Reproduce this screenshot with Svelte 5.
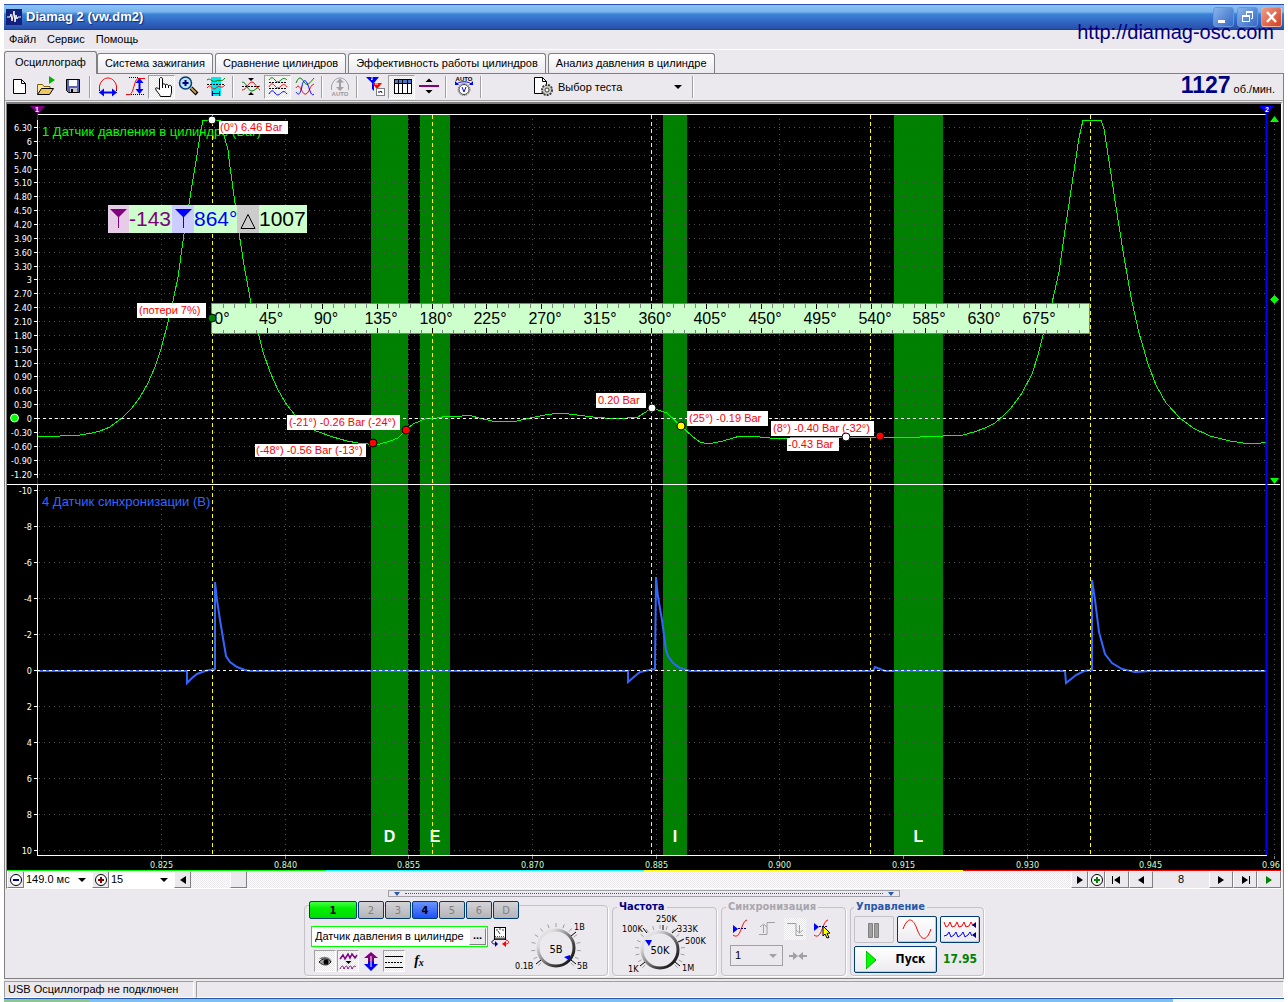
<script>
  const tabs = ['Осциллограф', 'Система зажигания', 'Сравнение цилиндров', 'Эффективность работы цилиндров', 'Анализ давления в цилиндре'];
  let activeTab = $state(0);
  let scroll = $state(4.5);
  let sensor = $state('Датчик давления в цилиндре');

  const tools = [
    ['new', 'open', 'save'],
    ['period', 'edge', 'hand', 'zoom', 'freq'],
    ['cross', 'split', 'overlay'],
    ['auto'],
    ['filter', 'table', 'divider'],
    ['autov']
  ];
  const pressed = ['hand', 'split', 'table'];

  const channels = [
    { name: '1', kind: 'wide' }, { name: '2' }, { name: '3' }, { name: '4', kind: 'blue' },
    { name: '5' }, { name: '6' }, { name: 'D' }
  ];

  // Pressure axis: 0.3 Bar per line, sync axis: 2 V per line
  const barLines = Array.from({ length: 26 }, (_, i) => {
    const v = 6.3 - i * 0.3;
    const whole = Math.abs(v - Math.round(v)) < 0.01;
    return { y: Math.round(127 + i * 13.86) + 0.5, text: whole ? String(Math.round(v) || 0) : v.toFixed(2) };
  });
  const voltLines = Array.from({ length: 11 }, (_, i) => ({ y: 490.5 + i * 36, text: String(i * 2 - 10) }));
  const timeLines = ['0.825', '0.840', '0.855', '0.870', '0.885', '0.900', '0.915', '0.930', '0.945', '0.96']
    .map((text, i) => ({ text, x: Math.round(161 + i * 123.65) + 0.5 }));

  const bands = [
    { x: 371, w: 37, name: 'D' }, { x: 420, w: 30, name: 'E' },
    { x: 663, w: 24, name: 'I' }, { x: 894, w: 49, name: 'L' }
  ];
  const strokes = [212.5, 432.5, 651.5, 870.5, 1090.5];

  const ticks = Array.from({ length: 79 }, (_, i) => ({ x: Math.round(212 + (i + 1) * 10.975) + 0.5, major: (i + 1) % 5 === 0 }));
  const degrees = Array.from({ length: 16 }, (_, i) => ({ x: i ? Math.round(212 + i * 54.88) + 4 : 222, text: i * 45 + '°' }));

  const notes = [
    { x: 219, y: 121, w: 69, h: 13, text: '(0°) 6.46 Bar' },
    { x: 137, y: 303, w: 69, h: 15, text: '(потери 7%)', dx: 2 },
    { x: 287, y: 415, w: 113, h: 15, text: '(-21°) -0.26 Bar (-24°)', dx: 2 },
    { x: 255, y: 444, w: 111, h: 13, text: '(-48°) -0.56 Bar (-13°)' },
    { x: 596, y: 393, w: 50, h: 15, text: '0.20 Bar', dx: 2 },
    { x: 687, y: 411, w: 81, h: 15, text: '(25°) -0.19 Bar', dx: 2 },
    { x: 771, y: 421, w: 103, h: 15, text: '(8°) -0.40 Bar (-32°)', dx: 2 },
    { x: 787, y: 438, w: 52, h: 13, text: '-0.43 Bar' }
  ];
  const dots = [
    [212, 120, '#fff'], [212, 318, '#008000'], [373, 443, '#f00'], [406, 430, '#f00'],
    [652, 408, '#fff'], [681, 426, '#ff0'], [846, 437, '#fff'], [880, 436, '#f00']
  ];

  const pressure = '38,437 60,436 80,435 92,433 100,431 110,427 122,418 132,408 140,397 148,383 155,367 161,349 168,322 173,301 178,277 184,234 189,204 193,179 197,155 200,135 203,120 219,120 222,122 224,135 228,150 230,167 235,203 239,233 244,265 251,303 259,336 263,352 270,372 278,390 287,405 295,415 305,425 316,431 333,437 347,441 358,443 368,444 380,444 390,441 398,438 406,430 413,424 420,421 427,418 437,418 448,416 457,417 468,415 483,419 497,422 517,421 530,418 545,415 560,413 577,415 593,417 617,419 638,417 652,408 667,413 681,426 693,437 700,442 708,444 723,441 740,436 760,437 780,439 800,437 846,437 853,438 880,437 920,437 943,436 963,435 974,432 985,428 995,423 1003,416 1011,408 1022,393 1032,374 1038,355 1043,335 1052,303 1059,272 1065,230 1072,184 1079,138 1083,120 1101,120 1104,129 1109,161 1116,207 1124,257 1131,297 1139,333 1148,364 1156,385 1166,403 1180,418 1193,428 1210,436 1230,441 1250,444 1261,443 1266,442';
  const sync = '38,671 187,671 187,683 192,678 197,674 205,671 215,669 215,582 217,600 220,620 223,638 226,656 230,662 237,667 245,670 250,671 626,671 628,671 628,682 635,676 640,672 655,669 656,577 658,597 662,620 666,650 668,656 673,663 680,668 690,671 873,671 875,667 885,671 1065,671 1066,683 1076,675 1084,671 1092,670 1092,580 1095,600 1099,632 1105,654 1112,663 1122,669 1135,672 1150,671 1266,671';

  // Scale strokes around a knob, clockwise from the lower left
  const knobTicks = (n) => Array.from({ length: n }, (_, i) => {
    const a = (135 + (i * 270) / (n - 1)) * Math.PI / 180;
    return { x1: 21 * Math.cos(a), y1: 21 * Math.sin(a), x2: 25 * Math.cos(a), y2: 25 * Math.sin(a) };
  });
</script>

{#snippet icon(name)}
  <svg class="ico" viewBox="0 0 24 22" width="24" height="22" fill="none">
    {#if name === 'new'}
      <path d="M6.5 3.5h8l4 4v10h-12z" fill="#fff" stroke="#000" /><path d="M14.5 3.5v4h4" stroke="#000" />
    {:else if name === 'open'}
      <path d="M3.500 18V8.500h5l1.500 2h6v3" fill="#ffe9a0" stroke="#806000" />
      <path d="M3.500 18.500l4-6h12l-4 6z" fill="#f0c860" stroke="#000" />
      <path d="M15 0l6 4-6 4z" fill="#00b400" />
    {:else if name === 'save'}
      <path d="M5.500 3.500h13v13h-11l-2-2z" fill="#5a66b4" stroke="#000" />
      <rect x="8" y="4" width="8" height="6" fill="#fff" /><rect x="9" y="12" width="7" height="4" fill="#c8c8d0" /><rect x="10" y="13" width="2" height="3" fill="#000" />
    {:else if name === 'period'}
      <path d="M3.500 14V10C5 4 9 2 12 2s7 2 8.500 8v4" stroke="#f00" />
      <path d="M3.500 14v4M20.500 14v4" stroke="#000" stroke-dasharray="1 1" />
      <path d="M7 16.500h10" stroke="#00f" stroke-width="2" /><path d="M3 16.500l5-4v8zM21 16.500l-5-4v8z" fill="#00f" />
    {:else if name === 'edge'}
      <path d="M3 18.500h4c4-2 4-15 8-16h7" stroke="#f00" /><path d="M6 1.500h10M8 18.500h13" stroke="#000" stroke-dasharray="1 1" />
      <path d="M16.500 6v8" stroke="#00f" stroke-width="2" /><path d="M16.500 2l-4 5h8zM16.500 18l-4-5h8z" fill="#00f" />
    {:else if name === 'hand'}
      <path d="M10.500 20.500c-1-3-5-6-5-8 0-1 2-1 4 1V3c0-2 3-2 3 0v6c0-2 3-1 3 0 0-1 3-1 3 1 1-1 3-1 3 1v5c0 2-1 3-1 4.500z" fill="#fff" stroke="#000" />
      <path d="M12.500 9v3M15.500 9v3M18.500 10v2" stroke="#000" />
    {:else if name === 'zoom'}
      <path d="M14 12l6 6" stroke="#000" stroke-width="4" /><path d="M14 12l5 5" stroke="#c8a040" stroke-width="2" />
      <circle cx="8.500" cy="7" r="6" fill="#b8e4f8" stroke="#003c74" stroke-width="1.500" /><path d="M8.500 4v6M5.500 7h6" stroke="#000080" stroke-width="2" />
    {:else if name === 'freq'}
      <rect x="7" y="1" width="10" height="19" fill="#00e8f0" />
      <path d="M3 4c4-3 4 3 9 1s5 2 9-3" stroke="#008000" /><path d="M3 12c4-6 5 4 9 0s5 2 9-3" stroke="#f00" />
      <path d="M3 8.500h18" stroke="#000" stroke-dasharray="2 1" /><path d="M8.500 15v5M15.500 15v5M8 17.500h8" stroke="#000080" />
    {:else if name === 'cross'}
      <path d="M3 6c5 0 5 9 10 9 3 0 5-4 8-5" stroke="#008000" /><path d="M3 14c5 0 6-8 10-8 3 0 5 7 8 8" stroke="#f00" />
      <path d="M3 10.500h18" stroke="#000" stroke-dasharray="2 1" /><path d="M9 2h6l-3 3zM9 19h6l-3-3z" fill="#000" />
    {:else if name === 'split'}
      <path d="M3 4c2-3 4-3 6 0s4 2 6 0 4-2 6 0" stroke="#008000" /><path d="M3 11c2-4 4-4 6-1s4 2 6 0 4-2 6 1" stroke="#f00" />
      <path d="M3 6.500h18M3 12.500h18" stroke="#000" stroke-dasharray="2 1" /><path d="M3 18c2-4 4-4 6-1s4 2 6 0 4-2 6 1" stroke="#00f" />
    {:else if name === 'overlay'}
      <path d="M3 7c3-7 5-6 8-1s6 1 10-4" stroke="#008000" /><path d="M3 12c4-7 6 8 10 6s3-8 8-10" stroke="#f00" />
      <path d="M3 16c2 3 4 4 6-6s5-4 7 2 3 8 5 6" stroke="#00f" />
    {:else if name === 'auto'}
      <path d="M3.500 14V10C5 4 9 2 12 2s7 2 8.500 8v4" stroke="#a0a0a0" /><path d="M12 5v8" stroke="#a0a0a0" stroke-width="2" />
      <path d="M12 2.500l-4 4h8zM12 15l-4-4h8z" fill="#a0a0a0" />
      <text x="12" y="20" text-anchor="middle" class="tiny" fill="#989898">AUTO</text>
    {:else if name === 'filter'}
      <path d="M3 1h13l-5 6v8l-2-2V7z" fill="#00f" /><path d="M9 7h10l-4 5v6l-2-2v-4z" fill="#f00" />
      <path d="M8 3l1 1v-3M12 8h3" stroke="#fff" /><rect x="13.500" y="12.500" width="8" height="7" fill="#fff" stroke="#808080" /><path d="M15 16h2l1-1 1 2" stroke="#000080" />
    {:else if name === 'table'}
      <rect x="4.500" y="3.500" width="17" height="14" fill="#fff" stroke="#000" /><rect x="5" y="4" width="16" height="3" fill="#4878c8" />
      <path d="M4 7.500h17M8.500 4v13M12.500 4v13M17.500 4v13" stroke="#000" />
    {:else if name === 'divider'}
      <rect x="2" y="9" width="20" height="2" fill="#800080" /><path d="M8.500 6h7L12 2.500zM8.500 14h7L12 17.500z" fill="#000" />
    {:else if name === 'autov'}
      <text x="12" y="5" text-anchor="middle" class="tiny" fill="#000">AUTO</text>
      <path d="M5 8c2-3 12-3 14 0" stroke="#00f" /><path d="M3 5v4h4zM21 5v4h-4z" fill="#00f" />
      <circle cx="12" cy="13.500" r="6" stroke="#606060" stroke-dasharray="1 1" /><circle cx="12" cy="13.500" r="5" fill="#fff" stroke="#404040" />
      <path d="M10 11l2 5 2-5" stroke="#00f" />
    {/if}
  </svg>
{/snippet}

{#snippet arrow(dir, bar, color)}
  <svg viewBox="0 0 12 10" width="12" height="10" fill={color || '#000'}>
    {#if dir === 'l'}<path d="M9 1v8L3 5z" />{:else}<path d="M3 1v8l6-4z" />{/if}
    {#if bar === 'l'}<rect x="1" y="1" width="1" height="8" />{:else if bar === 'r'}<rect x="10" y="1" width="1" height="8" />{/if}
  </svg>
{/snippet}

{#snippet sign(color, plus)}
  <svg viewBox="0 0 14 14" width="14" height="14" fill="none">
    <circle cx="7" cy="7" r="5.500" fill="#fff" stroke="#000" />
    <path d={plus ? 'M4 7h6M7 4v6' : 'M4 7h6'} stroke={color} stroke-width="2" />
  </svg>
{/snippet}

<div class="desk">
  <div class="window">
    <header class="title">
      <svg viewBox="0 0 16 16" width="16" height="16">
        <rect width="16" height="16" fill="#10207c" />
        <path d="M1 8h3l1-3 1 7 2-10 1 11 1-7 1 4 1-2h3" fill="none" stroke="#fff" />
      </svg>
      <h1>Diamag 2 (vw.dm2)</h1>
      <div class="winbtns">
        <button aria-label="Свернуть"><svg viewBox="0 0 20 20" width="20" height="20"><rect x="4" y="13" width="7" height="3" fill="#fff" /></svg></button>
        <button aria-label="Развернуть"><svg viewBox="0 0 20 20" width="20" height="20" fill="none" stroke="#fff"><path d="M8.500 8V5.500h6v6H13" /><path d="M8 5h7" stroke-width="2" /><rect x="4.500" y="8.500" width="7" height="6" /><path d="M4 9h8" stroke-width="2" /></svg></button>
        <button class="close" aria-label="Закрыть"><svg viewBox="0 0 20 20" width="20" height="20" stroke="#fff" stroke-width="2.400"><path d="M5 5l9 10M14 5L5 15" /></svg></button>
      </div>
      <a class="url" href="http://diamag-osc.com">http://diamag-osc.com</a>
    </header>

    <nav class="menu">
      <button>Файл</button><button>Сервис</button><button>Помощь</button>
    </nav>

    <div class="tabs" role="tablist">
      {#each tabs as t, i}
        <button class="tab" class:active={i === activeTab} role="tab" aria-selected={i === activeTab} onclick={() => (activeTab = i)}>{t}</button>
      {/each}
    </div>

    <main class="page">
      <div class="toolbar">
        {#each tools as group}
          {#each group as name}
            <button class="tool" class:down={pressed.includes(name)} aria-label={name}>{@render icon(name)}</button>
          {/each}
          <span class="sep"></span>
        {/each}
        <div class="test">
          <svg viewBox="0 0 21 20" width="21" height="20" fill="none">
            <path d="M1.500 .5h8l4 4v12h-12z" fill="#fff" stroke="#000" /><path d="M9.500 .5v4h4" stroke="#000" />
            <circle cx="14" cy="13" r="5" fill="#c8ccc0" stroke="#404040" stroke-width="2" stroke-dasharray="2 1" />
            <circle cx="14" cy="13" r="4" fill="#c8ccc0" /><circle cx="14" cy="13" r="2" fill="#fff" stroke="#404040" />
          </svg>
          <select aria-label="Выбор теста"><option>Выбор теста</option></select>
          <i class="caret"></i>
        </div>
        <span class="sep"></span>
        <div class="rpm"><b>1127</b> об./мин.</div>
      </div>

      <div class="scope">
        <svg class="plot" viewBox="7 104 1274 766">
          <rect x="7" y="104" width="1274" height="766" fill="#000" />
          {#each bands as b}
            <rect x={b.x} y="115" width={b.w} height="740" fill="#008000" />
          {/each}
          <g class="grid">
            {#each timeLines as t}<line x1={t.x} x2={t.x} y1="119" y2="855" />{/each}
            {#each [...barLines, ...voltLines] as l}<line x1="39" x2="1266" y1={l.y} y2={l.y} />{/each}
          </g>
          <g class="axis">
            <path d="M37.500 114V855.500H1267M37 114.500H1267M7 484.500H1280" />
            {#each [...barLines, ...voltLines] as l}<line x1="34" x2="38" y1={l.y} y2={l.y} />{/each}
          </g>
          <g class="scale">
            {#each [...barLines, ...voltLines] as l}<text x="32" y={l.y + 3} text-anchor="end">{l.text}</text>{/each}
          </g>
          <g class="scale time">
            {#each timeLines as t}
              <line x1={t.x} x2={t.x} y1="856" y2="859" stroke="#808080" />
              <text x={Math.min(t.x, 1271)} y="868" text-anchor="middle">{t.text}</text>
            {/each}
          </g>
          {#each bands as b}
            <text class="letter" x={b.x + b.w / 2} y="842" text-anchor="middle">{b.name}</text>
          {/each}
          <g stroke="#ff0" stroke-dasharray="4 3" class="crisp">
            {#each strokes as x}<line x1={x} x2={x} y1="115" y2="855" />{/each}
          </g>
          <text class="caption" x="42" y="136" fill="#0f0">1 Датчик давления в цилиндре (Bar)</text>
          <text class="caption" x="42" y="506" fill="#36f">4 Датчик синхронизации (В)</text>
          <polyline class="trace" points={pressure} stroke="#0f0" />
          <polyline class="trace sync" points={sync} stroke="#36f" />
          <path class="axis" d="M37 418.500H1266M37 670.500H1266" stroke-dasharray="3 3" />

          <path d="M37.500 108v12M37.500 478v6" stroke="#800080" />
          <path d="M30 106h15l-7 8z" fill="#800080" /><text class="flag" x="37" y="112">1</text>
          <path d="M1266.500 110V855" stroke="#00f" stroke-width="2" />
          <path d="M1259 106h15l-7 8z" fill="#00f" /><text class="flag" x="1267" y="112">2</text>
          <path d="M1270 122h9l-4.500-6zM1274.500 295l4.500 4.500-4.500 4.500-4.500-4.500zM1270 478h9l-4.500 6z" fill="#0f0" />
          <circle cx="14.500" cy="418" r="4" fill="#0f0" stroke="#dfd" />

          <g class="crisp">
            <rect x="108" y="205" width="199" height="28" fill="#cfc" />
            <rect x="108" y="205" width="21" height="28" fill="#e6cce6" />
            <rect x="172" y="205" width="22" height="28" fill="#ccf" />
            <rect x="237" y="205" width="22" height="28" fill="#ccc" />
          </g>
          <path d="M110 209h17l-8 8v11h-1v-11z" fill="#800080" /><path d="M175 209h17l-8 8v11h-1v-11z" fill="#00f" />
          <path d="M241 228.500h14l-7-14z" fill="none" stroke="#000" />
          <g class="readout">
            <text x="129" y="226" fill="#800080">-143</text>
            <text x="194" y="226" fill="#00f">864°</text>
            <text x="259" y="226" fill="#000">1007</text>
          </g>

          <rect x="211.500" y="303.500" width="878" height="30" fill="#cfc" stroke="#808080" />
          <g class="crisp">
            {#each ticks as t}
              <path d="M{t.x} 304v{t.major ? 5 : 4}M{t.x} 333v{t.major ? -5 : -3}" stroke={t.major ? '#000' : '#808080'} />
            {/each}
          </g>
          {#each degrees as d}
            <text class="deg" x={d.x} y="324" text-anchor="middle">{d.text}</text>
          {/each}

          {#each notes as n}
            <rect x={n.x} y={n.y} width={n.w} height={n.h} fill="#fff" />
            <text class="note" x={n.x + (n.dx || 1)} y={n.y + (n.h === 13 ? 10 : 11)}>{n.text}</text>
          {/each}
          {#each dots as [x, y, fill]}
            <circle cx={x} cy={y} r="4" {fill} stroke="#000" />
          {/each}
        </svg>

        <div class="strip"><i></i><i></i><i></i><i></i></div>
        <div class="scrollrow">
          <button class="sq" aria-label="Уменьшить">{@render sign('#000080', false)}</button>
          <label class="drop span"><select aria-label="Развёртка"><option>149.0 мс</option></select><i class="caret"></i></label>
          <button class="sq" aria-label="Увеличить">{@render sign('#800000', true)}</button>
          <label class="drop zoom"><select aria-label="Масштаб"><option>15</option></select><i class="caret"></i></label>
          <button class="sq" aria-label="Влево">{@render arrow('l')}</button>
          <input type="range" min="0" max="100" step="0.1" bind:value={scroll} aria-label="Прокрутка" />
          <button class="sq" aria-label="Вправо">{@render arrow('r')}</button>
          <button class="sq" aria-label="Добавить">{@render sign('#008000', true)}</button>
          <button class="nav" aria-label="В начало">{@render arrow('l', 'l')}</button>
          <button class="nav" aria-label="Назад">{@render arrow('l')}</button>
          <span class="frame">8</span>
          <button class="nav" aria-label="Вперёд">{@render arrow('r')}</button>
          <button class="nav" aria-label="В конец">{@render arrow('r', 'r')}</button>
          <button class="nav" aria-label="Воспроизвести">{@render arrow('r', '', '#008000')}</button>
        </div>
      </div>

      <div class="handle"><i></i><span></span><i></i></div>

      <div class="panel">
        <section class="group chan">
          <div class="channels">
            {#each channels as c}<button class="ch {c.kind || ''}">{c.name}</button>{/each}
          </div>
          <div class="chbody">
            <div class="chleft">
              <div class="sensor">
                <div class="field"><input type="text" bind:value={sensor} aria-label="Датчик" /><button>...</button></div>
                <svg viewBox="0 0 19 20" width="19" height="20" fill="none">
                  <rect x="3.500" y=".5" width="11" height="12" fill="#fff" stroke="#000" /><path d="M5 3h2M8 2h2M11 3h2M9 7l-2-3" stroke="#404040" />
                  <path d="M4 9.500h10" stroke="#008000" stroke-dasharray="1 1" /><path d="M4 11.500h10" stroke="#606060" stroke-width="2" />
                  <path d="M3 13c-3 1-3 4 1 4" stroke="#000080" /><path d="M4 14v6l3-3z" fill="#000080" />
                  <path d="M15 13c4 1 3 4 0 4" stroke="#f00" /><path d="M15 14v6l-4-3z" fill="#f00" />
                </svg>
              </div>
              <div class="modes">
                <button class="down" aria-label="Видимость"><svg viewBox="0 0 22 22" width="22" height="22" fill="none"><path d="M5 9c3-3 9-3 12 1l1 2c-2-1-3-2-4-2z" fill="#808080" /><path d="M5 12c3-4 9-4 12 0-3 4-8 4-12 0z" fill="#a0a0a0" stroke="#202020" /><circle cx="12" cy="12" r="2.500" fill="#000" /></svg></button>
                <button class="down" aria-label="Фильтр"><svg viewBox="0 0 22 22" width="22" height="22" fill="none"><path d="M3 9l3-4 2 4 3-5 2 4 2-4 3 4 2-3" stroke="#800080" stroke-width="1.500" /><path d="M8.500 11h6L11.500 14z" fill="#000" /><path d="M3 19c2-4 3-4 4 0 2-4 3-4 4 0 2-4 3-4 4 0 2-4 3-3 4-2" stroke="#800080" /></svg></button>
                <button aria-label="Сдвиг"><svg viewBox="0 0 22 22" width="22" height="22"><path d="M11 2l7 6h-4v3H8V8H4z" fill="#800080" /><path d="M11 21l7-7h-4v-3H8v3H4z" fill="#00f" /><path d="M11 6v11" stroke="#fff" /></svg></button>
                <button class="down" aria-label="Линии"><svg viewBox="0 0 22 22" width="22" height="22"><path d="M2 6.500h18M2 17.500h18" stroke="#000" /><path d="M2 12.500h18" stroke="#000" stroke-dasharray="2 1" /></svg></button>
                <button class="fx" aria-label="Функция"><i>f<sub>x</sub></i></button>
              </div>
            </div>
            <svg class="knob" viewBox="-42 -28 86 52" width="86" height="52">
              <g stroke="#a0a0a0">{#each knobTicks(15) as t}<line {...t} />{/each}</g>
              <path d="M15-12l5-4M15 12l5 4M-15 12l-5 4" stroke="#000" />
              <circle r="18" fill="#ebe9ed" stroke="url(#rim)" stroke-width="3" />
              <path d="M8 9l6-2v6z" fill="#00f" />
              <text class="val" y="5" text-anchor="middle">5В</text>
              <text x="18" y="-18">1В</text><text x="-41" y="21">0.1В</text><text x="21" y="21">5В</text>
            </svg>
          </div>
        </section>

        <fieldset class="group freq">
          <legend>Частота</legend>
          <svg class="knob" viewBox="-43 -37 94 61" width="94" height="61">
            <defs>
              <linearGradient id="rim" x1="0" y1="0" x2="1" y2="1"><stop offset=".2" stop-color="#e0e0e0" /><stop offset=".7" stop-color="#404040" /><stop offset="1" stop-color="#000" /></linearGradient>
            </defs>
            <g stroke="#a0a0a0">{#each knobTicks(17) as t}<line {...t} />{/each}</g>
            <path d="M-13-17l-4-5M3-20v-5M12-17l6-5M18-8l6-3M15 12l5 4M-15 12l-5 4" stroke="#000" />
            <circle r="18" fill="#ebe9ed" stroke="url(#rim)" stroke-width="3" />
            <path d="M-15-10h7l-3 6z" fill="#00f" />
            <text class="val" y="4" text-anchor="middle">50K</text>
            <text x="-38" y="-18">100K</text><text x="-4" y="-28">250K</text><text x="17" y="-18">333K</text>
            <text x="25" y="-6">500K</text><text x="-32" y="22">1K</text><text x="22" y="21">1M</text>
          </svg>
        </fieldset>

        <fieldset class="group trig">
          <legend>Синхронизация</legend>
          <div class="line">
            <button aria-label="Уровень"><svg viewBox="0 0 22 22" width="22" height="22" fill="none"><path d="M3 17c8 6 8-14 14-15" stroke="#f00" /><path d="M3 7v8l5-4z" fill="#00f" /><path d="M8 10.500h9" stroke="#000080" stroke-dasharray="2 1" /></svg></button>
            <button aria-label="Фронт"><svg viewBox="0 0 22 22" width="22" height="22" fill="none" stroke="#a0a0a0"><path d="M2 16.500h8v-12h8M6.500 15V7M3 9l3.500-3L10 9" /></svg></button>
            <button class="down soft" aria-label="Спад"><svg viewBox="0 0 22 22" width="22" height="22" fill="none" stroke="#a0a0a0"><path d="M3 5.500h9v12h7M15.500 7v8M12 12l3.500 3 3.500-3" /></svg></button>
            <button aria-label="Выбор"><svg viewBox="0 0 22 22" width="22" height="22" fill="none"><path d="M3 17c8 6 8-14 14-15" stroke="#f00" /><path d="M3 5v8l5-4z" fill="#00f" /><path d="M8 8.500h9" stroke="#000080" stroke-dasharray="2 1" /><path d="M12 8l7 7-3 .5 2 4-2 .5-2-4-2 2z" fill="#ff0" stroke="#000" /></svg></button>
          </div>
          <div class="line">
            <label class="drop src"><select disabled aria-label="Источник"><option>1</option></select><i class="caret"></i></label>
            <svg viewBox="0 0 20 10" width="20" height="10" fill="#a0a0a0"><path d="M1 4h4V1l5 4-5 4V6H1zM19 4h-4V1l-5 4 5 4V6h4z" /></svg>
          </div>
        </fieldset>

        <fieldset class="group run">
          <legend>Управление</legend>
          <div class="pads">
            <button class="pad off" aria-label="Пауза"><svg viewBox="0 0 40 27" width="40" height="27"><path d="M14.500 7.500h4v14h-4zM20.500 7.500h4v14h-4z" fill="#a0a0a0" stroke="#808080" /></svg></button>
            <button class="pad" aria-label="Синусоида"><svg viewBox="0 0 40 27" width="40" height="27"><path d="M6 13C11 0 16 2 20 13s9 14 14 0" fill="none" stroke="#f00" /></svg></button>
            <button class="pad" aria-label="Два канала"><svg viewBox="0 0 40 27" width="40" height="27" fill="none"><path d="M4 6l2 5 2-1 2-4 2 5 3-1 2-4 2 5 3-1 2-4 2 5 3-1 2-4 2 4" stroke="#f00" /><path d="M4 20l3-1 2-3 2 5 3-2 2-3 2 5 3-2 2-3 2 5 3-2 2-3 2 4" stroke="#00f" /><path d="M36 6v6l-4-3zM36 16v6l-4-3z" fill="#000080" /></svg></button>
            <button class="pad start"><svg viewBox="0 0 10 18" width="10" height="18"><path d="M0 0l10 9-10 9z" fill="#0f0" stroke="#0a0" /></svg>Пуск</button>
            <output>17.95</output>
          </div>
        </fieldset>
      </div>
    </main>

    <footer class="status"><span>USB Осциллограф не подключен</span><span></span></footer>
    <div class="taskbar"><i></i><i></i></div>
  </div>
</div>

<style>
  :global(body) { background:#fff; }
  .desk { padding:4px 4px 0; font-family:"Liberation Sans",Arial,sans-serif; font-size:11px; line-height:13px; color:#000; }
  .desk * { box-sizing:border-box; }
  .window { background:#ebe9ed; }
  button, select, input { font:inherit; color:inherit; margin:0; padding:0; border:0; background:none; border-radius:0; }
  button { display:flex; align-items:center; justify-content:center; }
  svg { display:block; flex-shrink:0; }
  select { appearance:none; outline:none; width:100%; }
  .caret { width:0; height:0; border:4px solid transparent; border-top-color:#000; border-bottom:0; flex-shrink:0; }

  .title { position:relative; display:flex; align-items:center; gap:4px; height:26px; padding:0 2px; border-top:1px solid #2a50b0; border-bottom:1px solid #1c4496; background:linear-gradient(#8cc4f4 0,#78b4ec 7px,#3c84d8 9px,#2f62be 18px,#2850a8); }
  .title h1 { flex:1; margin:0; font-size:13px; line-height:16px; color:#fff; text-shadow:1px 1px 1px #10287c; }
  .winbtns { display:flex; gap:3px; }
  .winbtns button { width:21px; height:20px; border:1px solid #6c94dc; border-radius:3px; background:linear-gradient(135deg,#88b4ec,#3468c4); overflow:hidden; }
  .winbtns .close { border-color:#fff6; background:linear-gradient(135deg,#f09c88,#d04020); }
  .url { position:absolute; right:10px; top:16px; font-size:20px; line-height:22px; color:#000080; text-decoration:none; }

  .menu { display:flex; gap:11px; height:20px; padding:0 5px; border-bottom:1px solid #fff; }
  .tabs { display:flex; align-items:flex-end; gap:2px; height:23px; }
  .tab { height:20px; padding:0 7px; border:1px solid #808080; border-bottom:0; border-radius:3px 3px 0 0; background:linear-gradient(#fff,#ebe9ed); }
  .tab.active { height:23px; margin-bottom:-1px; margin-right:-2px; padding:0 10px 1px; background:#ebe9ed; position:relative; }

  .page { border:1px solid #808080; }
  .toolbar { display:flex; align-items:center; height:27px; padding-right:8px; border-bottom:1px solid #a0a0a0; }
  .tool { width:27px; height:24px; }
  .down { background:repeating-conic-gradient(#fff 0 25%,#e6e5e8 0 50%) 0 0/2px 2px; border:1px solid #a0a0a0; border-right-color:#fff; border-bottom-color:#fff; }
  .down.soft { border-color:transparent; }
  .tool.down { overflow:hidden; }
  .sep { width:2px; height:22px; margin:0 3px; border-left:1px solid #a0a0a0; border-right:1px solid #fff; flex-shrink:0; }
  .ico { shape-rendering:geometricPrecision; }
  .tiny { font:bold 6px "Liberation Sans",sans-serif; }
  .test { display:flex; align-items:center; gap:4px; width:156px; margin-left:48px; padding-right:7px; }
  .rpm { margin-left:auto; line-height:24px; }
  .rpm b { font-size:23px; color:#000080; }

  .scope { margin:1px 1px 0; border:1px solid #808080; border-top-width:2px; border-right-color:#fff; border-bottom-color:#fff; }
  .plot { width:100%; height:auto; }
  .crisp, .grid, .axis, .trace { shape-rendering:crispEdges; }
  .grid { stroke:#505050; stroke-dasharray:1 4; }
  .axis { fill:none; stroke:#fff; }
  .trace { fill:none; stroke-width:1; }
  .sync { stroke-width:2; shape-rendering:auto; }
  .scale, .knob { font-family:"DejaVu Sans Condensed","DejaVu Sans",sans-serif; font-size:9px; }
  .scale { fill:#fff; }
  .scale.time { fill:#cfc; }
  .letter { font-size:16px; font-weight:bold; fill:#fff; }
  .caption { font-size:13px; }
  .flag { font-size:7px; font-weight:bold; fill:#fff; text-anchor:middle; }
  .readout { font-size:21px; }
  .deg { font-size:16px; fill:#000; }
  .note { font-size:11px; fill:#f00; }

  .strip { display:flex; height:1px; }
  .strip i { flex:1; background:#0f0; }
  .strip i:nth-child(2) { background:#0ff; }
  .strip i:nth-child(3) { background:#ff0; }
  .strip i:nth-child(4) { background:#f00; }
  .scrollrow { display:flex; height:17px; }
  .sq, .nav { width:17px; flex-shrink:0; background:#ebe9ed; border:1px solid #fff; border-right-color:#808080; border-bottom-color:#808080; }
  .nav { width:24px; }
  .drop { display:flex; align-items:center; background:#fff; padding:0 6px 0 2px; flex-shrink:0; }
  .span { width:68px; }
  .zoom { width:65px; }
  .frame { width:56px; text-align:center; line-height:17px; flex-shrink:0; }
  input[type=range] { flex:1; min-width:0; appearance:none; background:repeating-conic-gradient(#fff 0 25%,#ebe9ed 0 50%) 0 0/2px 2px; }
  input[type=range]::-webkit-slider-thumb { appearance:none; width:17px; height:17px; background:#ebe9ed; border:1px solid #fff; border-right-color:#808080; border-bottom-color:#808080; }

  .handle { display:flex; align-items:center; gap:5px; width:40%; height:7px; margin:1px auto 0; padding:0 5px; border:1px solid #a0a0a8; }
  .handle span { flex:1; border-top:1px dotted #2858a8; }
  .handle i { border:3px solid transparent; border-top:4px solid #2858a8; border-bottom:0; }

  .panel { display:flex; justify-content:center; gap:4px; padding:4px 0 2px; height:81px; }
  .group { margin:0; padding:0; min-width:0; border:1px solid #c4c2c8; border-radius:4px; box-shadow:1px 1px 0 #fff; }
  legend, .ch, .start, .pads output { font-family:"DejaVu Sans Condensed","DejaVu Sans",sans-serif; }
  legend { padding:0 2px; font-weight:bold; line-height:12px; color:#000080; }
  .chan { width:304px; margin-top:4px; padding-left:4px; }
  .channels { display:flex; gap:1px; margin-top:-5px; }
  .ch { width:26px; height:18px; border:1px solid #003c74; border-radius:2px; background:linear-gradient(#d4d4d8,#b4b4b8); color:#808080; }
  .ch.wide { width:48px; background:linear-gradient(#4f4,#0e0 40%,#0d0); color:#000; font-weight:bold; }
  .ch.blue { background:linear-gradient(#6a94ff,#2050f8); color:#000; font-weight:bold; }
  .chbody { display:flex; gap:4px; }
  .chleft { display:flex; flex-direction:column; gap:3px; padding:7px 0 0 2px; }
  .sensor { display:flex; align-items:center; gap:3px; }
  .field { display:flex; width:177px; height:21px; padding:1px; border:1px solid #0f0; background:#fff; }
  .field input { flex:1; min-width:0; padding-left:2px; }
  .field button { width:17px; border:1px solid #fff; border-right-color:#808080; border-bottom-color:#808080; background:#ebe9ed; font-weight:bold; line-height:8px; padding-bottom:4px; }
  .modes { display:flex; gap:1px; padding-left:3px; }
  .modes button { width:22px; height:22px; overflow:hidden; }
  .modes .fx { font:bold italic 14px/16px "Liberation Serif",serif; width:26px; }
  .fx sub { font-size:10px; line-height:8px; vertical-align:-1px; }
  .knob { align-self:flex-end; }
  .val { font-size:11px; }
  .freq { width:105px; padding-left:4px; }
  .trig { width:125px; padding-left:8px; }
  .trig legend { margin-left:-4px; color:#a8a6ac; }
  .line { display:flex; align-items:center; gap:5px; margin-top:5px; }
  .line button { width:22px; height:22px; overflow:hidden; }
  .src { width:53px; height:21px; border:1px solid #a0a0a0; background:none; padding:0 5px 0 4px; }
  .src select { opacity:1; }
  .src .caret { border-top-color:#a0a0a0; }
  .run { width:134px; padding:0 3px; }
  .run legend { color:#2858a8; }
  .pads { display:grid; grid-template-columns:repeat(3,40px); gap:3px; margin-top:3px; align-items:center; }
  .pad { height:27px; border:1px solid #003c74; border-radius:2px; background:linear-gradient(#fff,#ecebf0); box-shadow:inset -1px -1px 0 #c8c6d0; }
  .pad.off { border-color:#c4c2c8; background:#ebe9ed; box-shadow:none; }
  .start { grid-column:span 2; gap:20px; font-weight:bold; font-size:12px; }
  .pads output { font-weight:bold; font-size:12px; color:#008000; text-align:center; }

  .status { display:flex; gap:2px; padding-top:2px; background:#ebe9ed; }
  .status span { height:17px; padding-left:3px; line-height:15px; border:1px solid #a0a0a0; border-right-color:#fff; border-bottom-color:#fff; width:190px; white-space:nowrap; }
  .status span:last-child { flex:1; }
  .taskbar { display:flex; height:4px; border-top:1px solid #2858a8; background:#f4f8ff; }
  .taskbar i { width:85px; background:#8cc88c; }
  .taskbar i:last-child { width:1084px; background:#80c0f0; }
</style>
